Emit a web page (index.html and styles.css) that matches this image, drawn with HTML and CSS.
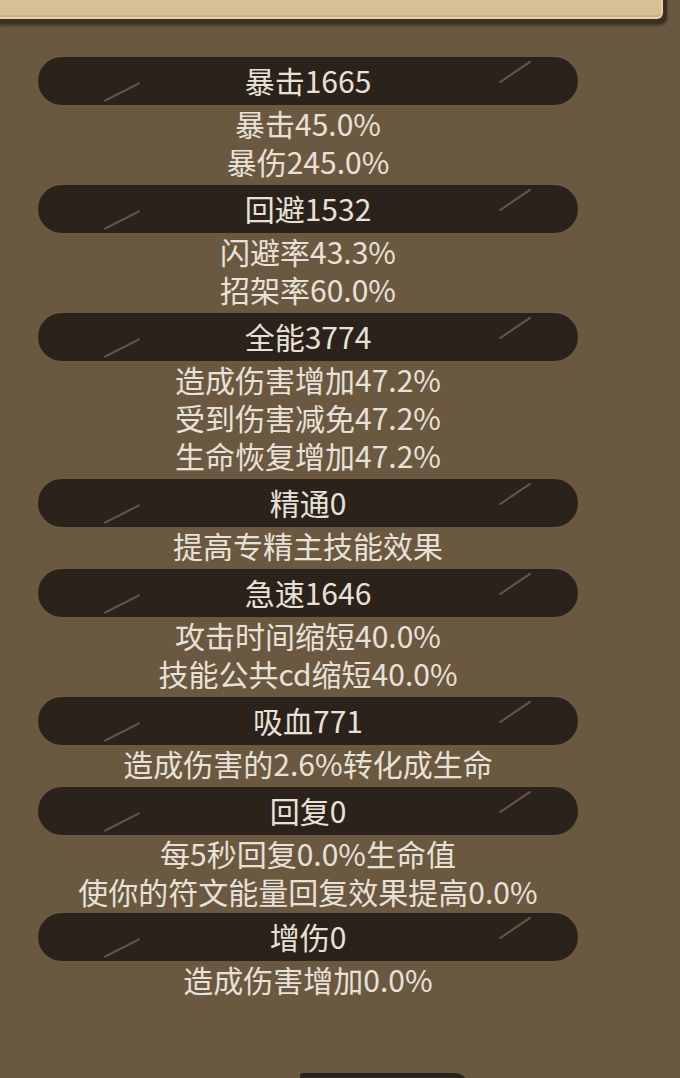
FILE: index.html
```html
<!DOCTYPE html>
<html lang="zh-CN">
<head>
  <meta charset="UTF-8">
  <meta name="viewport" content="width=device-width, initial-scale=1.0">
  <title>属性详情</title>
  <link rel="stylesheet" href="styles.css">
</head>
<body>
  <div class="panel-frame">
    <div class="panel"></div>
  </div>

  <div class="stats">
    <div class="stat-group">
      <div class="stat-bar">暴击1665</div>
      <div class="stat-line">暴击45.0%</div>
      <div class="stat-line">暴伤245.0%</div>
    </div>

    <div class="stat-group">
      <div class="stat-bar">回避1532</div>
      <div class="stat-line">闪避率43.3%</div>
      <div class="stat-line">招架率60.0%</div>
    </div>

    <div class="stat-group">
      <div class="stat-bar">全能3774</div>
      <div class="stat-line">造成伤害增加47.2%</div>
      <div class="stat-line">受到伤害减免47.2%</div>
      <div class="stat-line">生命恢复增加47.2%</div>
    </div>

    <div class="stat-group">
      <div class="stat-bar">精通0</div>
      <div class="stat-line">提高专精主技能效果</div>
    </div>

    <div class="stat-group">
      <div class="stat-bar">急速1646</div>
      <div class="stat-line">攻击时间缩短40.0%</div>
      <div class="stat-line">技能公共cd缩短40.0%</div>
    </div>

    <div class="stat-group">
      <div class="stat-bar">吸血771</div>
      <div class="stat-line">造成伤害的2.6%转化成生命</div>
    </div>

    <div class="stat-group">
      <div class="stat-bar">回复0</div>
      <div class="stat-line">每5秒回复0.0%生命值</div>
      <div class="stat-line">使你的符文能量回复效果提高0.0%</div>
    </div>

    <div class="stat-group">
      <div class="stat-bar">增伤0</div>
      <div class="stat-line">造成伤害增加0.0%</div>
    </div>
  </div>

  <div class="next-peek"></div>
</body>
</html>
```

FILE: styles.css
```css
body {
  margin: 0;
  background: #6a5940;
  font-family: "Noto Sans CJK SC", "Noto Sans", sans-serif;
  color: #e8e1d8;
  overflow: hidden;
}

.panel-frame {
  width: 667px;
  height: 25px;
  margin-top: -1px;
  background: #3a3024;
  border-bottom-right-radius: 8px;
  box-shadow: 0 2px 3px rgba(40, 30, 20, 0.5);
}

.panel {
  width: 661px;
  height: 18px;
  background: #d8bf96;
  border-bottom: 2px solid #e7d0a9;
  border-right: 2px solid #e7d0a9;
  border-bottom-right-radius: 6px;
  box-shadow: inset 0 -2px 0 #c9b089;
}

.stats {
  width: 540px;
  margin: 33px 0 0 38px;
}

.stat-group {
  padding-bottom: 4px;
}

.stat-group:nth-child(7) {
  padding-bottom: 2px;
}

.stat-bar {
  position: relative;
  height: 46px;
  padding-bottom: 2px;
  line-height: 46px;
  background: #2b231b;
  border-radius: 24px;
  text-align: center;
  font-size: 30px;
}

.stat-bar::before,
.stat-bar::after {
  content: "";
  position: absolute;
  height: 2px;
  background: rgba(150, 130, 105, 0.55);
  border-radius: 1px;
}

.stat-bar::before {
  left: 64px;
  top: 34px;
  width: 40px;
  transform: rotate(-27deg);
}

.stat-bar::after {
  left: 458px;
  top: 14px;
  width: 38px;
  transform: rotate(-34deg);
}

.stat-line {
  height: 36px;
  padding-bottom: 2px;
  line-height: 36px;
  text-align: center;
  font-size: 30px;
}

.next-peek {
  width: 170px;
  height: 16px;
  margin: 70px 0 0 300px;
  background: #2b231b;
  border-radius: 8px 40px 0 0;
}
```
